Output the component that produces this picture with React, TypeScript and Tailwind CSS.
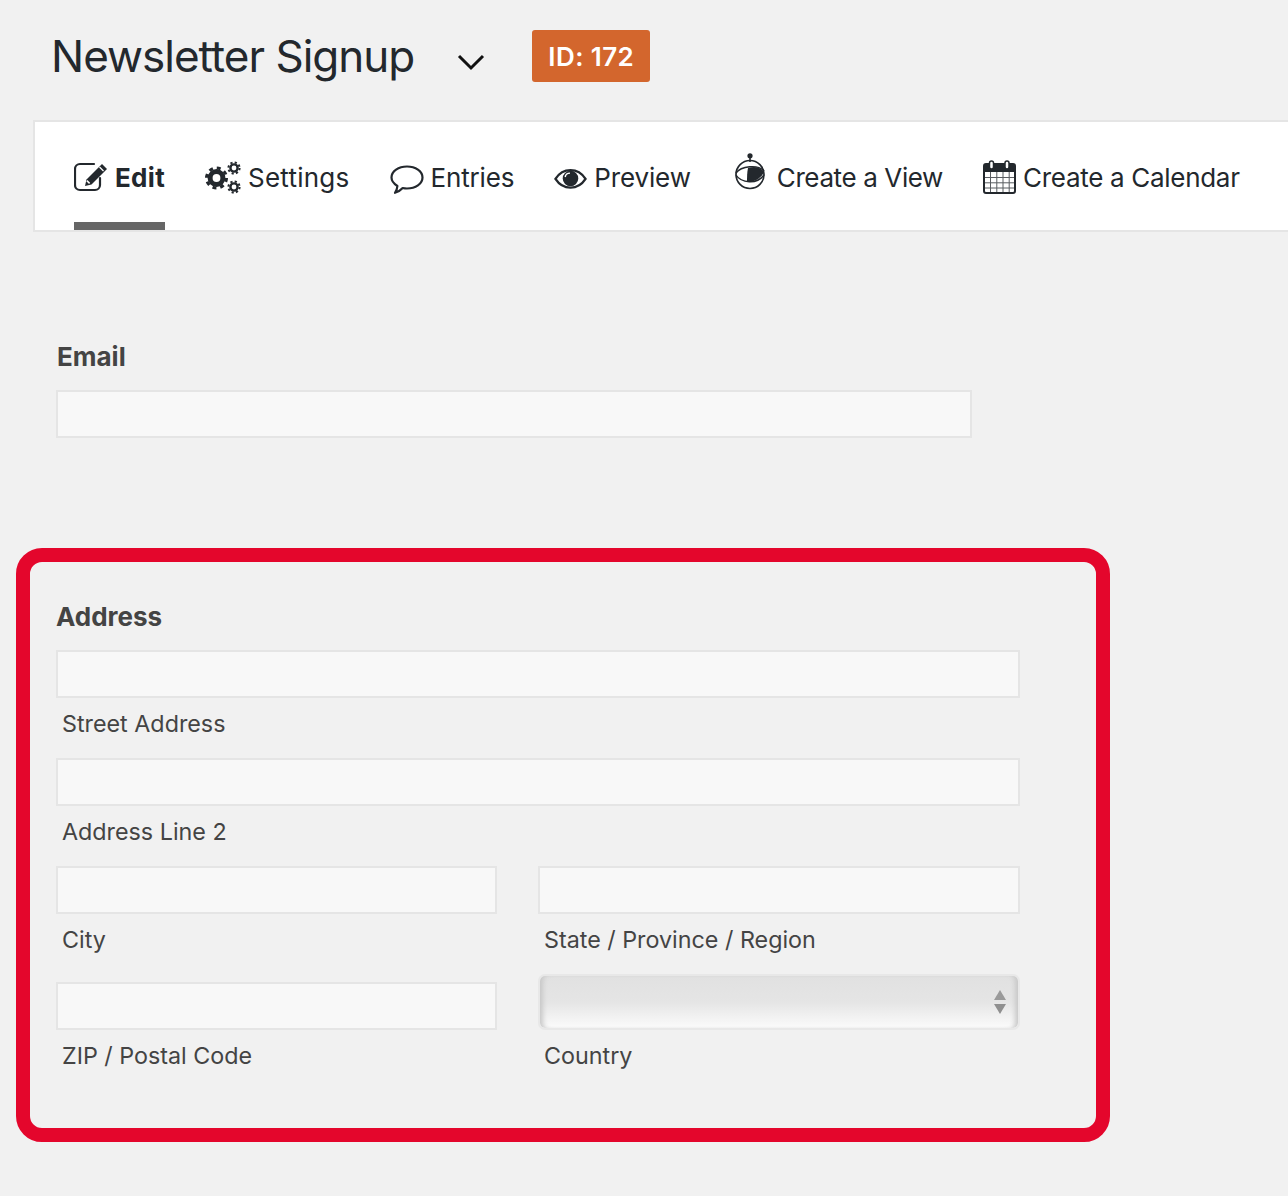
import React from "react";

const EditIcon = () => (
  <svg width="34" height="30" viewBox="0 0 34 30" className="shrink-0">
    <path
      d="M20 2H6a5 5 0 0 0-5 5v16a5 5 0 0 0 5 5h15a5 5 0 0 0 5-5v-7"
      fill="none"
      stroke="currentColor"
      strokeWidth="2.2"
      strokeLinecap="round"
    />
    <path d="M28 2l5 5-15.500 15.500-6.500 1.500 1.500-6.500z" fill="currentColor" />
    <path d="M12.800 18.600l2.800 2.800" stroke="#ffffff" strokeWidth="1.500" />
    <path d="M25.500 5l4 4" stroke="#ffffff" strokeWidth="1.200" />
  </svg>
);

const SettingsIcon = () => (
  <svg width="36" height="33" viewBox="0 0 36 33" className="shrink-0" fill="none" stroke="currentColor">
    <circle cx="11.500" cy="17" r="6.400" strokeWidth="5" />
    <circle cx="11.500" cy="17" r="10" strokeWidth="3" strokeDasharray="3.93 3.92" />
    <circle cx="29" cy="7" r="3.600" strokeWidth="2.400" />
    <circle cx="29" cy="7" r="5.600" strokeWidth="2" strokeDasharray="2.200 2.200" />
    <circle cx="29" cy="26" r="3.600" strokeWidth="2.400" />
    <circle cx="29" cy="26" r="5.600" strokeWidth="2" strokeDasharray="2.200 2.200" />
  </svg>
);

const CommentIcon = () => (
  <svg width="34" height="36" viewBox="0 0 34 36" className="shrink-0">
    <path
      d="M17 7.500c8.500 0 15.500 4.600 15.500 11s-7 11-15.500 11c-1.500 0-3-.2-4.300-.5-1.800 2-4.500 3.800-7.700 4.800 1.400-2 2.200-4 2.400-6.800C4 24.800 1.500 21.800 1.500 18.500c0-6.400 7-11 15.500-11z"
      fill="none"
      stroke="currentColor"
      strokeWidth="2.200"
      strokeLinejoin="round"
    />
  </svg>
);

const EyeIcon = () => (
  <svg width="33" height="26" viewBox="0 0 34 26" className="shrink-0">
    <path
      d="M1.500 15C5.500 8.800 11 6 17 6s11.500 2.800 15.500 9c-4 6.200-9.500 9-15.500 9S5.500 21.200 1.500 15z"
      fill="none"
      stroke="currentColor"
      strokeWidth="2.400"
    />
    <circle cx="17" cy="14.500" r="8" fill="currentColor" />
    <path d="M11.500 13c.5-2.500 2.500-4 5-4" fill="none" stroke="#ffffff" strokeWidth="1.500" />
  </svg>
);

const ViewIcon = () => (
  <svg width="39" height="48" viewBox="0 0 39 48" className="shrink-0">
    <g transform="translate(4 0)">
      <circle cx="15" cy="2.800" r="2.600" fill="currentColor" />
      <path d="M15 5v4" stroke="currentColor" strokeWidth="1.600" />
      <circle cx="15" cy="21.500" r="14" fill="none" stroke="currentColor" strokeWidth="1.700" />
      <path d="M1 20C6 13 23 11 29 18" fill="none" stroke="currentColor" strokeWidth="1.400" />
      <path d="M1 22c5 8 21 10 28 0" fill="none" stroke="currentColor" strokeWidth="1.400" />
      <path d="M13 15c6-2 13-1 16 4-2 5-8 10-17 10 0-5 0-9 1-14z" fill="currentColor" />
    </g>
  </svg>
);

const CalendarIcon = () => (
  <svg width="33" height="34" viewBox="0 0 33 34" className="shrink-0">
    <rect x="1" y="4" width="31" height="29" rx="2" fill="none" stroke="currentColor" strokeWidth="2" />
    <rect x="1" y="4" width="31" height="8" fill="currentColor" />
    <path
      d="M7.500 12v20M13.800 12v20M20 12v20M26.200 12v20M1 17.500h31M1 22.800h31M1 28h31"
      stroke="currentColor"
      strokeWidth="1"
      opacity="0.75"
    />
    <rect x="6.500" y="1" width="4" height="8" rx="2" fill="#ffffff" stroke="currentColor" strokeWidth="1.500" />
    <rect x="22" y="1" width="4" height="8" rx="2" fill="#ffffff" stroke="currentColor" strokeWidth="1.500" />
  </svg>
);

const Tab = ({
  icon,
  label,
  active,
  labelClass = "",
}: {
  icon: React.ReactNode;
  label: string;
  active?: boolean;
  labelClass?: string;
}) => (
  <div
    className={`flex h-full items-center gap-[7px] border-b-[8px] pt-[10px] ${
      active ? "border-[#666666] font-bold tracking-[0.3px]" : "border-transparent"
    }`}
  >
    {icon}
    <span className={`whitespace-nowrap ${labelClass}`}>{label}</span>
  </div>
);

const TextInput = ({ className = "" }: { className?: string }) => (
  <div className={`h-12 border-2 border-[#e5e5e5] bg-[#f8f8f8] ${className}`} />
);

const SubLabel = ({ children }: { children: React.ReactNode }) => (
  <div className="mt-[12px] pl-[6px] text-[23.3px] leading-[28px] text-[#444444]">{children}</div>
);

const Field = ({ label }: { label: string }) => (
  <div>
    <TextInput />
    <SubLabel>{label}</SubLabel>
  </div>
);

const App = () => {
  return (
    <div className="h-[1196px] overflow-hidden bg-[#f1f1f1] font-['Inter',sans-serif]">
      <div className="flex h-[120px] items-start pl-[51px] pt-[30px]">
        <h1 className="text-[44px] leading-[52px] tracking-[-1px] text-[#23282d]">Newsletter Signup</h1>
        <svg width="28" height="18" viewBox="0 0 28 18" className="ml-[43px] mt-[24px]">
          <path d="M2 2l12 12L26 2" fill="none" stroke="#111111" strokeWidth="3" />
        </svg>
        <div className="ml-[47px] flex h-[52px] w-[118px] items-center justify-center rounded-[3px] bg-[#d3662d] text-[26px] font-semibold tracking-[0.4px] text-white">
          ID: 172
        </div>
      </div>

      <div className="ml-[33px] flex h-[112px] items-center gap-10 border-2 border-r-0 border-[#e5e5e5] bg-white pl-[39px] text-[26px] text-[#23282d]">
        <Tab active icon={<EditIcon />} label="Edit" />
        <Tab icon={<SettingsIcon />} label="Settings" labelClass="tracking-[0.25px]" />
        <Tab icon={<CommentIcon />} label="Entries" labelClass="tracking-[-0.15px]" />
        <Tab icon={<EyeIcon />} label="Preview" labelClass="tracking-[-0.15px]" />
        <Tab icon={<ViewIcon />} label="Create a View" labelClass="tracking-[-0.38px]" />
        <Tab icon={<CalendarIcon />} label="Create a Calendar" labelClass="tracking-[-0.3px]" />
      </div>

      <div className="ml-[56px] mt-[109px] w-[916px]">
        <div className="pl-[1px] text-[26px] font-bold leading-[32px] text-[#444444]">Email</div>
        <TextInput className="mt-[17px]" />
      </div>

      <div className="ml-4 mt-[110px] h-[594px] w-[1094px] rounded-[26px] border-[14px] border-[#e4062c] pl-[26px] pr-[76px] pt-[39px]">
        <div className="text-[26px] font-bold leading-[32px] text-[#444444]">Address</div>
        <div className="mt-[17px] flex flex-col gap-5">
          <Field label="Street Address" />
          <Field label="Address Line 2" />
          <div className="grid grid-cols-[441px_482px] gap-x-[41px]">
            <Field label="City" />
            <Field label="State / Province / Region" />
          </div>
          <div className="grid grid-cols-[441px_482px] gap-x-[41px]">
            <div className="mt-[8px]">
              <Field label="ZIP / Postal Code" />
            </div>
            <div>
              <div className="flex h-[56px] items-center justify-end rounded-[7px] border-2 border-[#e8e8e8] bg-gradient-to-b from-[#e1e1e1] via-[#e5e5e5] to-[#fbfbfb] pr-[12px] shadow-[inset_6px_0_5px_-3px_#c8c8c8,inset_-6px_0_5px_-3px_#c8c8c8]">
                <svg width="12" height="24" viewBox="0 0 12 24">
                  <path d="M6 0l6 10H0z" fill="#9a9a9a" />
                  <path d="M0 14h12L6 24z" fill="#8f8f8f" />
                </svg>
              </div>
              <SubLabel>Country</SubLabel>
            </div>
          </div>
        </div>
      </div>
    </div>
  );
};

export default App;
